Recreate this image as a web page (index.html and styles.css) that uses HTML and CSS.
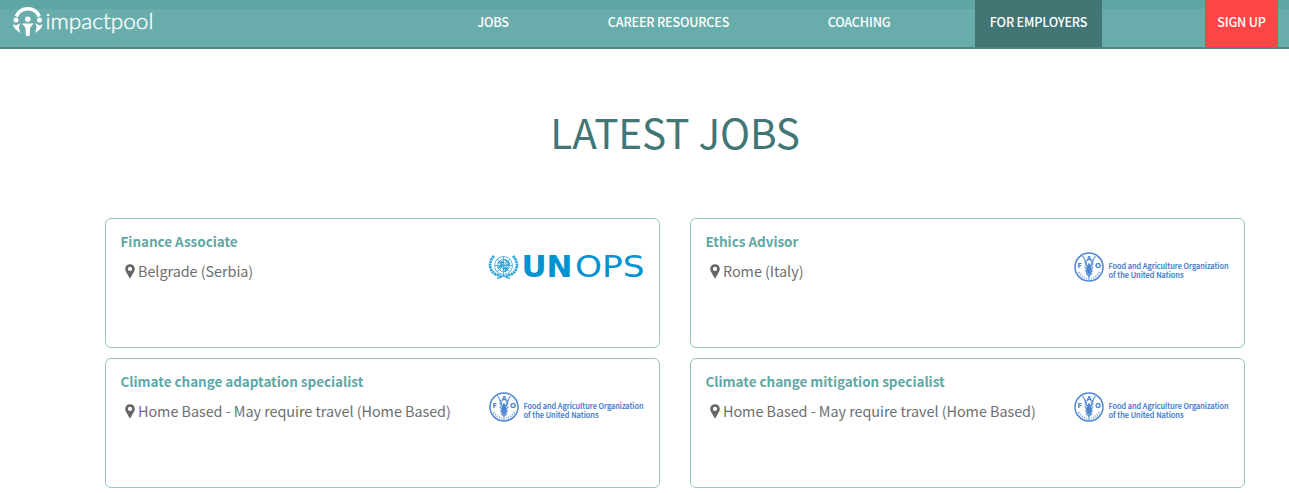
FILE: index.html
```html
<!DOCTYPE html>
<html lang="en">
<head>
<meta charset="utf-8">
<title>Impactpool</title>
<link rel="stylesheet" href="styles.css">
</head>
<body>
<svg class="defs" width="0" height="0" aria-hidden="true">
  <symbol id="pin" viewBox="0 0 10 15">
    <path fill-rule="evenodd" d="M5 0.3C2.2 0.3 0.2 2.3 0.2 4.9C0.2 6 0.5 6.6 0.9 7.4L4.2 13.6C4.5 14.3 5.5 14.3 5.8 13.6L9.1 7.4C9.5 6.6 9.8 6 9.8 4.9C9.8 2.3 7.800 0.3 5 0.3ZM5 2.8A2.1 2.1 0 1 1 5 7A2.1 2.1 0 1 1 5 2.8Z"/>
  </symbol>
  <symbol id="emblem" viewBox="0 0 156 32">
    <g fill="none" stroke="#5e92d6">
      <circle cx="15" cy="16" r="14" stroke="#4f86d0" stroke-width="1.5"/>
      <path stroke-width="1.1" d="M15 12V29M8.500 5L13 12M21.500 5L17 12M10.500 9L13 15M19.500 9L17 15"/>
      <path stroke-width="1.4" d="M11 12Q12 15 15 16Q18 15 19 12M11 15.500Q12 18.500 15 19.500Q18 18.500 19 15.500M11.500 19Q12.500 22 15 22.500Q17.500 22 18.500 19M12 22.500L15 25L18 22.500"/>
      <path stroke-width="1.8" stroke-dasharray="1.300 1.200" d="M4.500 21Q8 26.500 13 27.500M25.500 21Q22 26.500 17 27.500" opacity=".7"/>
    </g>
    <ellipse cx="15" cy="18" rx="2.200" ry="5.500" fill="#4f86d0"/>
  </symbol>
</svg>

<header class="bar">
  <a class="brand">
    <svg width="156" height="40" viewBox="0 0 156 40">
      <path d="M16.300 16.500A12.400 12.400 0 0 1 39.300 16.500" fill="none" stroke="#fff" stroke-width="3.400"/>
      <g fill="#fff">
        <circle cx="16" cy="20" r="2.500"/><circle cx="39.500" cy="20" r="2.500"/><circle cx="27.800" cy="19.300" r="2.700"/>
        <path d="M13.200 24L15.800 25.500L20.300 23.300L18.800 27L20.300 33L17 30.500Q13.600 28 13.200 24ZM42.300 24L39.700 25.500L35.200 23.300L36.700 27L35.200 33L38.500 30.500Q42 28 42.300 24Z"/>
        <path d="M22 23.600Q27.800 23.200 33.500 23.600L30.200 27.500L29.500 36H26L25.300 27.500Z"/>
      </g>
      <text class="wordmark" x="45.500" y="29" textLength="108" lengthAdjust="spacingAndGlyphs">impactpool</text>
    </svg>
  </a>
  <nav class="nav">
    <a class="jobs">JOBS</a>
    <a class="career">CAREER RESOURCES</a>
    <a class="coaching">COACHING</a>
    <a class="employers">FOR EMPLOYERS</a>
    <a class="signup">SIGN UP</a>
  </nav>
</header>

<main class="content">
  <h1 class="heading">LATEST JOBS</h1>
  <section class="grid">
    <article class="card">
      <div><h2 class="title">Finance Associate</h2>
      <p class="place"><svg class="pin"><use href="#pin"/></svg>Belgrade (Serbia)</p></div>
      <svg class="logo" viewBox="0 0 156 32">
        <g fill="none" stroke="#2ba3d8">
          <g stroke-width=".8">
            <circle cx="14.500" cy="14.500" r="9"/><circle cx="14.500" cy="14.500" r="6"/><circle cx="14.500" cy="14.500" r="3"/>
            <path d="M14.500 5.500V23.500M5.500 14.500H23.500M8.100 8.100L20.900 20.900M20.900 8.100L8.100 20.900"/>
          </g>
          <path stroke-width="2.800" stroke-dasharray="2.200 .6" d="M5 5C-1 11 0 20 7 23.500L12 25M24 5C30 11 29 20 22 23.500L17 25"/>
          <path stroke-width="1.200" d="M8 27.300Q12 27 14.500 24.500Q17 27 21 27.300"/>
          <path stroke-width="1.800" d="M9 12L13 11L12 15L9 17M16 8.500L20 12L18 15M14 18L18 17L16 21"/>
        </g>
        <text class="un" x="32.500" y="26" textLength="51" lengthAdjust="spacingAndGlyphs">UN</text>
        <text class="ops" x="86" y="26" textLength="69.500" lengthAdjust="spacingAndGlyphs">OPS</text>
      </svg>
    </article>
    <article class="card">
      <div><h2 class="title">Ethics Advisor</h2>
      <p class="place"><svg class="pin"><use href="#pin"/></svg>Rome (Italy)</p></div>
      <svg class="logo fao" viewBox="0 0 156 32"><use href="#emblem"/>
        <text class="letter" x="12.500" y="10">A</text><text class="letter" x="3.500" y="16.500">F</text><text class="letter" x="21" y="16.500">O</text>
        <text x="34.500" y="17.500" textLength="120" lengthAdjust="spacingAndGlyphs">Food and Agriculture Organization</text>
        <text x="34.500" y="26.700" textLength="75" lengthAdjust="spacingAndGlyphs">of the United Nations</text>
      </svg>
    </article>
    <article class="card">
      <div><h2 class="title">Climate change adaptation specialist</h2>
      <p class="place"><svg class="pin"><use href="#pin"/></svg>Home Based - May require travel (Home Based)</p></div>
      <svg class="logo fao" viewBox="0 0 156 32"><use href="#emblem"/>
        <text class="letter" x="12.500" y="10">A</text><text class="letter" x="3.500" y="16.500">F</text><text class="letter" x="21" y="16.500">O</text>
        <text x="34.500" y="17.500" textLength="120" lengthAdjust="spacingAndGlyphs">Food and Agriculture Organization</text>
        <text x="34.500" y="26.700" textLength="75" lengthAdjust="spacingAndGlyphs">of the United Nations</text>
      </svg>
    </article>
    <article class="card">
      <div><h2 class="title">Climate change mitigation specialist</h2>
      <p class="place"><svg class="pin"><use href="#pin"/></svg>Home Based - May require travel (Home Based)</p></div>
      <svg class="logo fao" viewBox="0 0 156 32"><use href="#emblem"/>
        <text class="letter" x="12.500" y="10">A</text><text class="letter" x="3.500" y="16.500">F</text><text class="letter" x="21" y="16.500">O</text>
        <text x="34.500" y="17.500" textLength="120" lengthAdjust="spacingAndGlyphs">Food and Agriculture Organization</text>
        <text x="34.500" y="26.700" textLength="75" lengthAdjust="spacingAndGlyphs">of the United Nations</text>
      </svg>
    </article>
  </section>
</main>
</body>
</html>
```
FILE: styles.css
```css
* { box-sizing: border-box; }
body {
  margin: 0;
  height: 493px;
  overflow: hidden;
  background: #fff;
  font-family: "Noto Sans CJK SC", "Open Sans", sans-serif;
}
.defs { display: block; height: 0; }
.bar {
  display: flex;
  height: 49px;
  background: linear-gradient(#5fa5a4 9px, #68adab 9px);
  border-bottom: 2px solid #518583;
}
.brand { width: 156px; height: 47px; }
.brand svg { display: block; }
.wordmark { font: 300 21px Lato, sans-serif; fill: #fff; stroke: #fff; stroke-width: .35px; }
.nav {
  display: flex;
  flex: 1;
  font-size: 12.600px;
  letter-spacing: -.18px;
  font-weight: 500;
  line-height: 44px;
  color: #fff;
  white-space: nowrap;
}
.nav a { height: 47px; text-align: center; }
.jobs { width: 34px; margin-left: 320px; }
.career { width: 123px; margin-left: 97px; }
.coaching { width: 64px; margin-left: 97px; }
.employers { width: 127px; margin-left: 84px; background: #417675; }
.signup { width: 73px; margin-left: 103px; background: #ff4547; }
.content { padding: 51px 44px 0 105px; }
.heading {
  margin: 0;
  height: 64px;
  line-height: 64px;
  font-size: 40.500px;
  letter-spacing: -.1px;
  font-weight: 400;
  color: #417675;
  text-align: center;
}
.grid {
  display: grid;
  grid-template-columns: 555px 555px;
  gap: 10px 30px;
  margin-top: 54px;
}
.card {
  display: flex;
  justify-content: space-between;
  height: 130px;
  padding: 12px 14px 0 14.500px;
  border: 1px solid #93c6c4;
  border-radius: 6px;
}
.title {
  margin: 0;
  font-size: 13.500px;
  letter-spacing: -.04px;
  font-weight: 700;
  line-height: 20px;
  color: #5fa8a6;
  white-space: nowrap;
}
.place {
  display: flex;
  align-items: center;
  gap: 3px;
  margin: 9px 0 0 4.500px;
  font-size: 14.400px;
  letter-spacing: -.04px;
  font-weight: 400;
  line-height: 22px;
  color: #6e6e6e;
  white-space: nowrap;
}
.pin { width: 10px; height: 15px; fill: #666; }
.logo { flex: none; width: 156px; height: 32px; margin-top: 20px; overflow: visible; }
.fao text { font: 500 7.800px "Noto Sans CJK SC", sans-serif; fill: #3f7acb; stroke: #3f7acb; stroke-width: .15px; }
.fao .letter { font: 700 7.500px "Open Sans", sans-serif; fill: #3f7fce; }
.un { font: 700 30px "DejaVu Sans", sans-serif; fill: #0092d1; }
.ops { font: 400 30px "DejaVu Sans", sans-serif; fill: #0092d1; }
```
